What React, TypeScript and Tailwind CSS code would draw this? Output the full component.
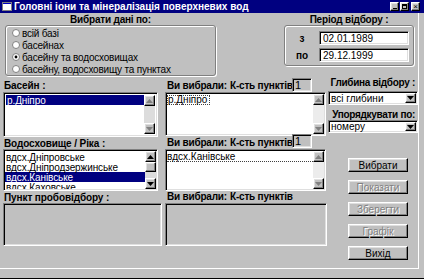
import React from "react";

const sunken =
  "border border-t-[#808080] border-l-[#808080] border-r-white border-b-white shadow-[inset_1px_1px_0_#000,inset_-1px_-1px_0_#dfdfdf]";
const raised =
  "border border-t-white border-l-white border-r-black border-b-black shadow-[inset_-1px_-1px_0_#808080,inset_1px_1px_0_#dfdfdf]";
const etched =
  "border border-[#808080] rounded-[3px] shadow-[inset_1px_1px_0_#fff,1px_1px_0_#fff]";

type TriProps = { up?: boolean; gray?: boolean };

const Tri = ({ up, gray }: TriProps) => (
  <svg width="7" height="4" viewBox="0 0 7 4">
    <polygon
      points={up ? "3.5,0 7,4 0,4" : "0,0 7,0 3.5,4"}
      fill={gray ? "#808080" : "#000"}
    />
  </svg>
);

type ScrollProps = { gray?: boolean; thumb?: boolean; track?: string };

const ScrollBar = ({ gray, thumb, track = "bg-[#dcdcdc]" }: ScrollProps) => (
  <div className={`flex w-[11px] shrink-0 flex-col ${track}`}>
    <div className={`${raised} flex h-[11px] items-center justify-center bg-[#c0c0c0]`}>
      <Tri up gray={gray} />
    </div>
    <div className="flex-1">
      {thumb && <div className={`${raised} h-[10px] bg-[#c0c0c0]`} />}
    </div>
    <div className={`${raised} flex h-[11px] items-center justify-center bg-[#c0c0c0]`}>
      <Tri gray={gray} />
    </div>
  </div>
);

const Radio = ({ checked }: { checked?: boolean }) => (
  <svg width="8" height="8" viewBox="0 0 8 8" className="shrink-0">
    <circle cx="4" cy="4" r="3.5" fill="#fff" stroke="#808080" strokeWidth="1" />
    {checked && <circle cx="4" cy="4" r="1.4" fill="#000" />}
  </svg>
);

const Combo = ({ value, h }: { value: string; h: string }) => (
  <div className={`${sunken} flex w-[90px] bg-white ${h}`}>
    <div className="flex flex-1 items-center pl-[2px]">{value}</div>
    <div className={`${raised} m-[1px] flex w-[11px] items-center justify-center bg-[#c0c0c0]`}>
      <Tri />
    </div>
  </div>
);

const Button = ({ label, disabled }: { label: string; disabled?: boolean }) => (
  <div
    className={`${raised} ml-[20px] flex h-[14px] w-[60px] items-center justify-center bg-[#c0c0c0] ${
      disabled ? "text-[#808080] [text-shadow:1px_1px_0_#fff]" : ""
    }`}
  >
    {label}
  </div>
);

const CountBox = () => (
  <div className={`${sunken} flex h-[14px] w-[20px] shrink-0 items-center bg-[#c0c0c0] pl-[2px] text-[11px] font-normal`}>
    1
  </div>
);

const SelectedLabel = ({ box, h }: { box?: "top" | "up"; h: string }) => (
  <div className={`flex ${h} items-end font-bold tracking-[-0.2px]`}>
    <span className="w-[65px] pb-[1px] pl-[2px]">Ви вибрали:</span>
    <span className="w-[62px] pb-[1px]">К-сть пунктів</span>
    {box === "top" && (
      <div className="self-start pt-[1px]">
        <CountBox />
      </div>
    )}
    {box === "up" && (
      <div className="-mt-[2px] self-start">
        <CountBox />
      </div>
    )}
  </div>
);

const reservoirs = [
  "вдсх.Дніпровське",
  "вдсх.Дніпродзержинське",
  "вдсх.Канівське",
  "вдсх.Каховське",
];

export default function App() {
  return (
    <div className="flex h-[279px] w-[424px] flex-col overflow-hidden whitespace-nowrap bg-[#c0c0c0] font-['Liberation_Sans',Arial,sans-serif] text-[10px] leading-[11px] text-black">
      {/* title bar */}
      <div className="flex h-[13px] shrink-0 items-center bg-[#000080] pl-[2px] pr-[4px]">
        <svg width="10" height="9" viewBox="0 0 10 9">
          <rect x="0" y="0" width="10" height="9" fill="#fff" />
          <rect x="0" y="0" width="10" height="2" fill="#0000c0" />
          <rect x="0.5" y="0.5" width="9" height="8" fill="none" stroke="#808080" strokeWidth="1" />
        </svg>
        <span className="ml-[2px] text-[10px] font-bold text-white">
          Головні іони та мінералізація поверхневих вод
        </span>
        <div className="ml-auto flex gap-[1px]">
          <div className={`${raised} flex h-[9px] w-[9px] items-end justify-center bg-[#c0c0c0] pb-[1px]`}>
            <div className="h-[1px] w-[4px] bg-black" />
          </div>
          <div className={`${raised} flex h-[9px] w-[9px] items-center justify-center bg-[#c0c0c0]`}>
            <div className="h-[5px] w-[5px] border border-t-2 border-black" />
          </div>
          <div className={`${raised} ml-[1px] flex h-[9px] w-[9px] items-center justify-center bg-[#c0c0c0] text-[8px] leading-[8px]`}>
            ×
          </div>
        </div>
      </div>

      <div className="flex flex-1 flex-col">
        <div className="flex h-[256px] w-[419px] flex-col border-r border-b border-white">
          {/* top row */}
          <div className="flex h-[64px] pl-[5px]">
            <div className="w-[211px]">
              <div className="flex h-[12px] items-center justify-center font-bold tracking-[-0.2px]">
                Вибрати дані по:
              </div>
              <div className={`${etched} h-[51px] pl-[6px] pt-[1px] tracking-[-0.2px]`}>
                {[
                  "всій базі",
                  "басейнах",
                  "басейну та водосховищах",
                  "басейну, водосховищу та пунктах",
                ].map((t, i) => (
                  <div key={t} className="flex h-[12px] items-center gap-[2px]">
                    <Radio checked={i === 2} />
                    <span>{t}</span>
                  </div>
                ))}
              </div>
            </div>

            <div className="ml-[68px] w-[130px]">
              <div className="flex h-[12px] items-center justify-center font-bold tracking-[-0.2px]">
                Період відбору :
              </div>
              <div className={`${etched} flex h-[41px] flex-col gap-[3px] pt-[5px]`}>
                <div className="flex h-[14px]">
                  <div className="flex w-[34px] items-center justify-center font-bold">з</div>
                  <div className={`${sunken} flex w-[90px] items-center bg-white pl-[3px]`}>
                    02.01.1989
                  </div>
                </div>
                <div className="flex h-[14px]">
                  <div className="flex w-[34px] items-center justify-center font-bold">по</div>
                  <div className={`${sunken} flex w-[90px] items-center bg-white pl-[3px]`}>
                    29.12.1999
                  </div>
                </div>
              </div>
            </div>
          </div>

          {/* lower part */}
          <div className="flex pl-[3px]">
            {/* basins / reservoirs / points */}
            <div className="flex w-[160px] flex-col tracking-[-0.1px]">
              <div className="flex h-[15px] items-end pb-[1px] pl-[1px] font-bold">Басейн :</div>
              <div className={`${sunken} flex h-[45px] w-[155px] bg-white p-[2px]`}>
                <div className="flex-1">
                  <div className="h-[10px] bg-[#000080] pl-[1px] text-white">р.Дніпро</div>
                </div>
                <ScrollBar gray />
              </div>
              <div className="flex h-[12px] items-end pl-[1px] font-bold">Водосховище / Ріка :</div>
              <div className={`${sunken} flex h-[42px] w-[155px] bg-white p-[1px]`}>
                <div className="h-[38px] flex-1 overflow-hidden pt-[1px]">
                  {reservoirs.map((r, i) => (
                    <div
                      key={r}
                      className={`h-[10px] pl-[1px] ${i === 2 ? "bg-[#000080] text-white" : ""}`}
                    >
                      {r}
                    </div>
                  ))}
                </div>
                <ScrollBar thumb />
              </div>
              <div className="flex h-[12px] items-end pl-[1px] font-bold">Пункт пробовідбору :</div>
              <div className={`${sunken} h-[43px] w-[159px]`} />
            </div>

            {/* selected */}
            <div className="ml-[2px] flex w-[162px] flex-col">
              <SelectedLabel box="top" h="h-[15px]" />
              <div className={`${sunken} flex h-[44px] w-[161px] bg-white p-[1px]`}>
                <div className="flex-1 pt-[1px]">
                  <div className="h-[10px] w-fit border border-dotted border-[#404040] pr-[2px] leading-[8px]">
                    р.Дніпро
                  </div>
                </div>
                <ScrollBar gray track="bg-[#ececec]" />
              </div>
              <SelectedLabel box="up" h="h-[13px]" />
              <div className={`${sunken} flex h-[42px] w-[161px] bg-white p-[1px]`}>
                <div className="flex-1 pt-[1px]">
                  <div className="h-[10px] w-full border-b border-dotted border-[#404040] leading-[9px]">
                    вдсх.Канівське
                  </div>
                </div>
                <ScrollBar gray track="bg-[#ececec]" />
              </div>
              <SelectedLabel h="h-[12px]" />
              <div className={`${sunken} h-[43px] w-[162px]`} />
            </div>

            {/* options and buttons */}
            <div className="ml-[1px] flex w-[90px] flex-col">
              <div className="flex h-[11px] items-center justify-end pr-[3px] font-bold tracking-[-0.3px]">
                Глибина відбору :
              </div>
              <div className="mt-[3px]">
                <Combo value="всі глибини" h="h-[14px]" />
              </div>
              <div className="mt-[2px] flex h-[13px] items-end justify-end pr-[3px] font-bold tracking-[-0.3px]">
                Упорядкувати по:
              </div>
              <Combo value="номеру" h="h-[13px]" />
              <div className="mt-[25px] flex flex-col gap-[8px]">
                <Button label="Вибрати" />
                <Button label="Показати" disabled />
                <Button label="Зберегти" disabled />
                <Button label="Графік" disabled />
                <Button label="Вихід" />
              </div>
            </div>
          </div>
        </div>
        <div className="flex-1 border-b border-black" />
      </div>
    </div>
  );
}
